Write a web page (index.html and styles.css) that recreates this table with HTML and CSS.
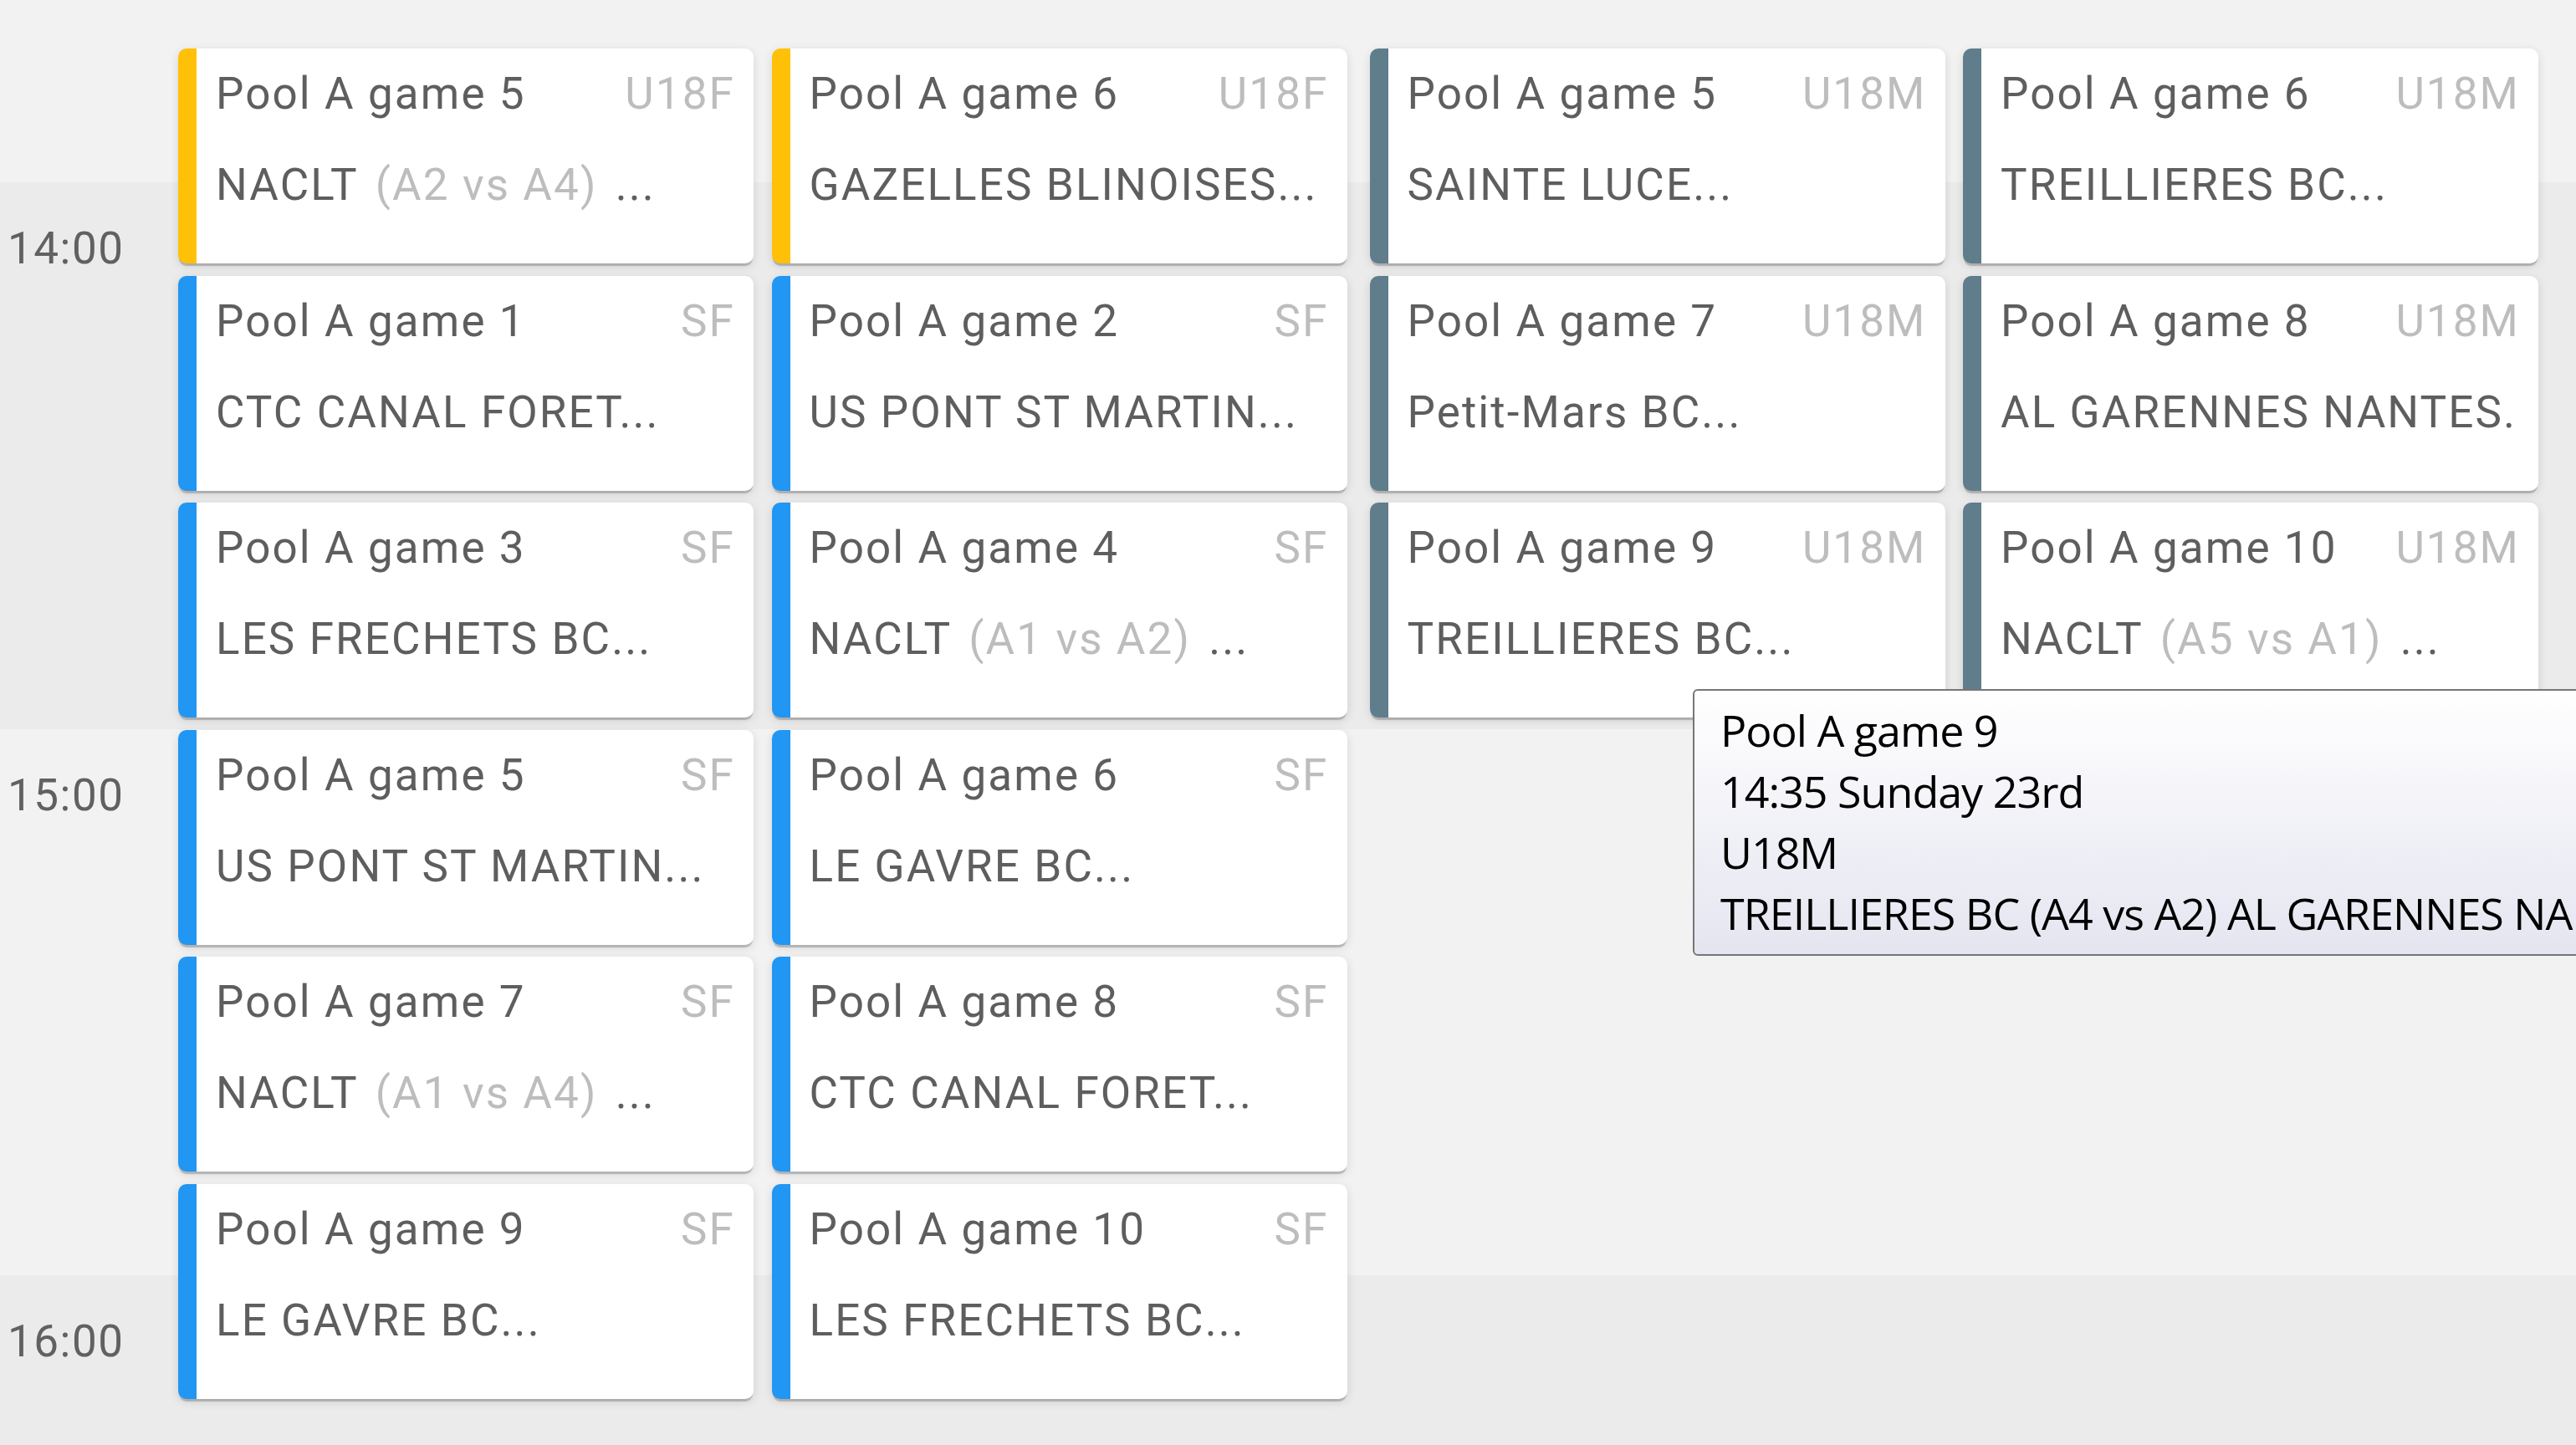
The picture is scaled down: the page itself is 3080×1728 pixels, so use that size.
FILE: index.html
```html
<!DOCTYPE html>
<html lang="fr">
<head>
    <meta charset="UTF-8">
    <meta name="viewport" content="width=device-width, initial-scale=1.0">
    <title>Planning des matchs</title>
    <link rel="stylesheet" href="styles.css">
</head>
<body>
    <div class="calendar">
        <!-- hour bands -->
        <div class="hours">
            <div class="hour light pre"></div>
            <div class="hour dark"><span class="hour-label">14:00</span></div>
            <div class="hour light"><span class="hour-label">15:00</span></div>
            <div class="hour dark"><span class="hour-label">16:00</span></div>
        </div>

        <div class="events">
            <div class="group">
                <div class="column">
                    <div class="game u18f">
                        <div class="game-head"><span class="game-name">Pool A game 5</span><span class="game-cat">U18F</span></div>
                        <div class="game-teams">NACLT <span class="vs">(A2 vs A4)</span> ...</div>
                    </div>
                    <div class="game sf">
                        <div class="game-head"><span class="game-name">Pool A game 1</span><span class="game-cat">SF</span></div>
                        <div class="game-teams">CTC CANAL FORET...</div>
                    </div>
                    <div class="game sf">
                        <div class="game-head"><span class="game-name">Pool A game 3</span><span class="game-cat">SF</span></div>
                        <div class="game-teams">LES FRECHETS BC...</div>
                    </div>
                    <div class="game sf">
                        <div class="game-head"><span class="game-name">Pool A game 5</span><span class="game-cat">SF</span></div>
                        <div class="game-teams">US PONT ST MARTIN...</div>
                    </div>
                    <div class="game sf">
                        <div class="game-head"><span class="game-name">Pool A game 7</span><span class="game-cat">SF</span></div>
                        <div class="game-teams">NACLT <span class="vs">(A1 vs A4)</span> ...</div>
                    </div>
                    <div class="game sf">
                        <div class="game-head"><span class="game-name">Pool A game 9</span><span class="game-cat">SF</span></div>
                        <div class="game-teams">LE GAVRE BC...</div>
                    </div>
                </div>
                <div class="column">
                    <div class="game u18f">
                        <div class="game-head"><span class="game-name">Pool A game 6</span><span class="game-cat">U18F</span></div>
                        <div class="game-teams">GAZELLES BLINOISES...</div>
                    </div>
                    <div class="game sf">
                        <div class="game-head"><span class="game-name">Pool A game 2</span><span class="game-cat">SF</span></div>
                        <div class="game-teams">US PONT ST MARTIN...</div>
                    </div>
                    <div class="game sf">
                        <div class="game-head"><span class="game-name">Pool A game 4</span><span class="game-cat">SF</span></div>
                        <div class="game-teams">NACLT <span class="vs">(A1 vs A2)</span> ...</div>
                    </div>
                    <div class="game sf">
                        <div class="game-head"><span class="game-name">Pool A game 6</span><span class="game-cat">SF</span></div>
                        <div class="game-teams">LE GAVRE BC...</div>
                    </div>
                    <div class="game sf">
                        <div class="game-head"><span class="game-name">Pool A game 8</span><span class="game-cat">SF</span></div>
                        <div class="game-teams">CTC CANAL FORET...</div>
                    </div>
                    <div class="game sf">
                        <div class="game-head"><span class="game-name">Pool A game 10</span><span class="game-cat">SF</span></div>
                        <div class="game-teams">LES FRECHETS BC...</div>
                    </div>
                </div>
            </div>
            <div class="group">
                <div class="column">
                    <div class="game u18m">
                        <div class="game-head"><span class="game-name">Pool A game 5</span><span class="game-cat">U18M</span></div>
                        <div class="game-teams">SAINTE LUCE...</div>
                    </div>
                    <div class="game u18m">
                        <div class="game-head"><span class="game-name">Pool A game 7</span><span class="game-cat">U18M</span></div>
                        <div class="game-teams">Petit-Mars BC...</div>
                    </div>
                    <div class="game u18m">
                        <div class="game-head"><span class="game-name">Pool A game 9</span><span class="game-cat">U18M</span></div>
                        <div class="game-teams">TREILLIERES BC...</div>
                    </div>
                </div>
                <div class="column">
                    <div class="game u18m">
                        <div class="game-head"><span class="game-name">Pool A game 6</span><span class="game-cat">U18M</span></div>
                        <div class="game-teams">TREILLIERES BC...</div>
                    </div>
                    <div class="game u18m">
                        <div class="game-head"><span class="game-name">Pool A game 8</span><span class="game-cat">U18M</span></div>
                        <div class="game-teams">AL GARENNES NANTES.</div>
                    </div>
                    <div class="game u18m">
                        <div class="game-head"><span class="game-name">Pool A game 10</span><span class="game-cat">U18M</span></div>
                        <div class="game-teams">NACLT <span class="vs">(A5 vs A1)</span> ...</div>
                    </div>
                </div>
            </div>
        </div>

        <!-- hover tooltip -->
        <div class="tooltip">
            <div>Pool A game 9</div>
            <div>14:35 Sunday 23rd</div>
            <div>U18M</div>
            <div>TREILLIERES BC (A4 vs A2) AL GARENNES NANTES</div>
        </div>
    </div>
</body>
</html>
```

FILE: styles.css
```css
body {
    margin: 0;
    background-color: #f2f2f2;
    overflow: hidden;
    font-family: Roboto, "Liberation Sans", sans-serif;
}
.calendar {
    position: relative;
    display: grid;
    height: 1728px;
    overflow: hidden;
}
.hours, .events {
    grid-area: 1 / 1;
}
.hours {
    display: flex;
    flex-direction: column;
}
.hour {
    flex: none;
    height: 653.5px;
}
.hour.pre {
    height: 218px;
}
.light {
    background-color: #f2f2f2;
}
.dark {
    background-color: #ebebeb;
}
.hour-label {
    display: block;
    padding: 48px 0 0 9px;
    font-size: 53px;
    line-height: 62px;
    letter-spacing: 1.5px;
    color: #616161;
}
.events {
    display: flex;
    align-items: flex-start;
    gap: 27px;
    padding: 58px 0 0 213px;
}
.group {
    display: flex;
    gap: 21.5px;
}
.column {
    width: 688px;
    display: flex;
    flex-direction: column;
    gap: 14.6px;
}
.game {
    height: 257px;
    box-sizing: border-box;
    background-color: #ffffff;
    border-left: 22px solid #2196f3;
    border-radius: 10px;
    padding: 0 22px 0 23px;
    box-shadow: 0 4px 1px -1px rgba(0, 0, 0, 0.2), 0 3px 12px rgba(0, 0, 0, 0.12);
    font-size: 53px;
    line-height: 109px;
    letter-spacing: 2.1px;
    color: #5e5e5e;
}
.game.u18f {
    border-left-color: #ffc107;
}
.game.u18m {
    border-left-color: #607d8b;
}
.game-head {
    display: flex;
    justify-content: space-between;
}
.game-cat {
    color: #bdbdbd;
}
.game-teams {
    white-space: nowrap;
    overflow: hidden;
}
.vs {
    color: #bdbdbd;
    padding: 0 6px;
}
.tooltip {
    position: absolute;
    left: 2024px;
    top: 824px;
    border: 2px solid #767676;
    border-radius: 6px;
    padding: 10px 40px 13px 31px;
    background: linear-gradient(#ffffff, #e4e5f0);
    font-family: "Open Sans", "Noto Sans", sans-serif;
    font-size: 52px;
    line-height: 73px;
    letter-spacing: -1px;
    color: #000000;
    white-space: nowrap;
}
```
